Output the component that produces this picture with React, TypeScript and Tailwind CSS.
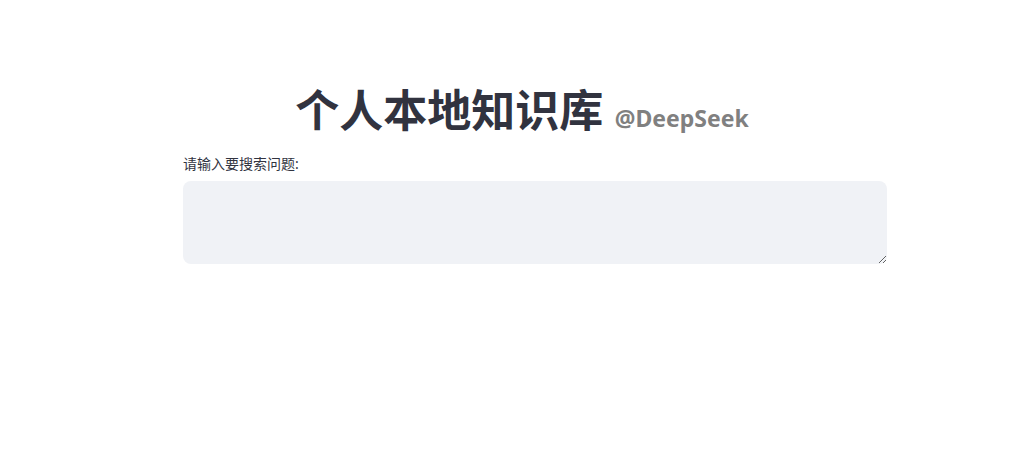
export default function App() {
  return (
    <div className="min-h-[471px] bg-white" style={{ fontFamily: '"Noto Sans", "Noto Sans CJK SC", sans-serif' }}>
      <div className="ml-[183px] w-[704px] pt-[77px]">

        {/* 标题 */}
        <h1 className="text-center pr-[26px] text-[44px] font-bold leading-[66px] text-[#31333f]">
          个人本地知识库{' '}
          <span className="text-[23px] text-[#808080]">@DeepSeek</span>
        </h1>

        <div className="mt-[4px]">
          <label className="block text-[14px] leading-[18px] text-[#31333f] mb-[8px]">
            请输入要搜索问题:
          </label>

          <textarea
            className="block w-full h-[83px] rounded-lg bg-[#f0f2f6] px-3 py-2 text-sm text-[#31333f] outline-none resize-y"
          />
        </div>

      </div>
    </div>
  );
}
